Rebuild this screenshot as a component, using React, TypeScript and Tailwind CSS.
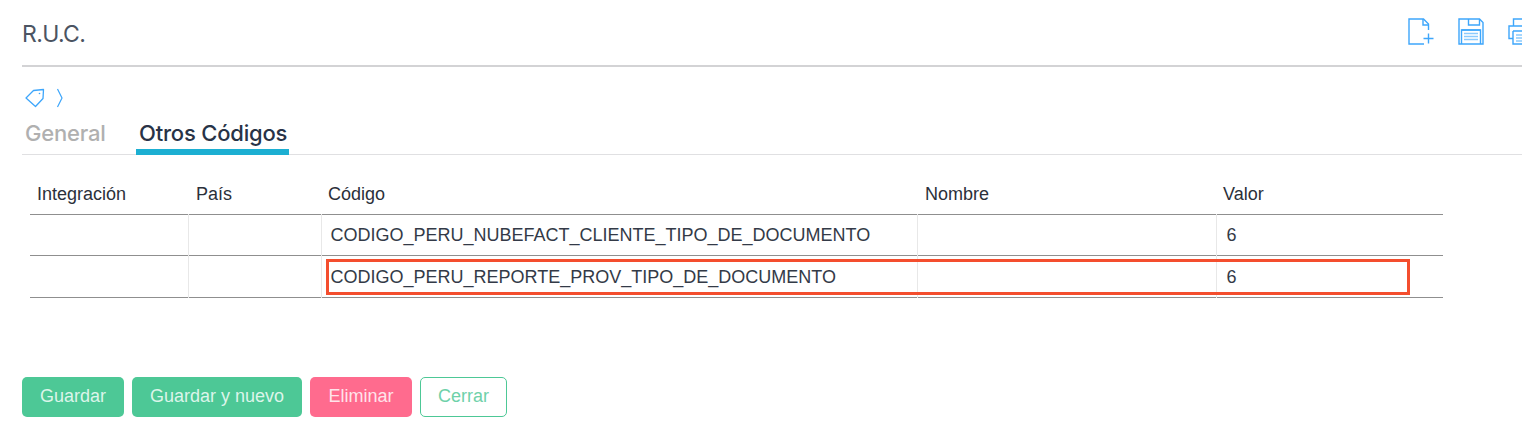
import React from "react";

const blue = "#3ea6fb";

function NewFile() {
  return (
    <svg width="26" height="27" viewBox="0 0 26 27" fill="none" stroke={blue} strokeWidth="1.4">
      <path d="M20.500 12V6L15.500 1H1v25h15" />
      <path d="M15 1v6h6" />
      <path d="M20.500 15.500v10M15.500 20.500h10" />
    </svg>
  );
}
function Save() {
  return (
    <svg width="26" height="27" viewBox="0 0 26 27" fill="none" stroke={blue} strokeWidth="1.4">
      <path d="M1 1h20.500L25 4.500V26H1z" />
      <path d="M10.500 1v6h11V1" />
      <path d="M3.500 26V12h19v14" />
      <path d="M3.500 12h19" />
      <path d="M6 15.500h14M6 18.500h14M6 21.500h14" strokeOpacity="0.6" />
    </svg>
  );
}
function Printer() {
  return (
    <svg width="26" height="27" viewBox="0 0 26 27" fill="none" stroke={blue} strokeWidth="1.4" className="shrink-0">
      <path d="M5.500 8V1h20v7" />
      <path d="M5 20.500H1V8h25" />
      <path d="M5 13h21M5 13v13h21" />
      <path d="M8 17h18M8 20h18M8 23h18" strokeOpacity="0.6" />
    </svg>
  );
}
function Tag() {
  return (
    <svg width="20" height="20" viewBox="0 0 20 20" fill="none" stroke={blue} strokeWidth="1.3" strokeLinejoin="round">
      <path d="M1 10 8.500 2.500 18.500 1.500 18 10.500 10.500 18.500z" />
      <circle cx="14.500" cy="5.500" r="0.8" fill={blue} stroke="none" />
    </svg>
  );
}
function Chevron() {
  return (
    <svg width="8" height="20" viewBox="0 0 8 20" fill="none" stroke={blue} strokeWidth="1.2">
      <path d="M1.500 1 6 10l-4.500 9" />
    </svg>
  );
}

const headers = [
  ["Integración", "w-[158px]", "pl-[7px]"],
  ["País", "w-[133px]", "pl-[8px]"],
  ["Código", "w-[596px]", "pl-[7px]"],
  ["Nombre", "w-[299px]", "pl-[8px]"],
  ["Valor", "w-[227px]", "pl-[7px]"],
];

const rows = [
  "CODIGO_PERU_NUBEFACT_CLIENTE_TIPO_DE_DOCUMENTO",
  "CODIGO_PERU_REPORTE_PROV_TIPO_DE_DOCUMENTO",
];

export default function App() {
  return (
    <div className="w-[1522px] h-[434px] overflow-hidden bg-white pl-[22px] font-['Liberation_Sans',sans-serif]">
      <header className="h-[67px] flex items-center justify-between border-b-2 border-[#d3d3d5]">
        <h1 className="font-['Inter',sans-serif] text-[23px] font-normal tracking-[-0.6px] text-[#4c5462] pt-[4px]">R.U.C.</h1>
        <div className="flex items-center gap-[24px] -mr-[12px] mb-[2px] overflow-hidden">
          <NewFile />
          <Save />
          <Printer />
        </div>
      </header>

      <nav className="flex items-center gap-[11px] h-[20px] mt-[21px] ml-[3px]">
        <Tag />
        <Chevron />
      </nav>

      <div className="flex h-[48px] -mt-[1px] border-b border-[#e0e0e2] font-['Inter',sans-serif] text-[22px]">
        <div className="ml-[3px] w-[111px] pt-[13px] font-medium tracking-[-0.2px] text-[#b0b0b0] leading-[26px]">General</div>
        <div className="w-[153px] h-[48px] border-b-[6px] border-[#1cafd2] pl-[3px] pt-[13px] font-medium tracking-[-0.2px] text-[#283347] leading-[26px] whitespace-nowrap">
          Otros Códigos
        </div>
      </div>

      <div className="relative ml-[8px] mt-[19px] w-[1413px]">
        <table className="w-[1413px] table-fixed border-collapse text-[18px]">
          <thead>
            <tr className="h-[40px] border-b border-[#8f8f8f]">
              {headers.map(([h, w, p]) => (
                <th key={h} className={`${w} ${p} pt-[2px] text-left font-normal text-[#2b303a]`}>
                  {h}
                </th>
              ))}
            </tr>
          </thead>
          <tbody>
            {rows.map((r, i) => (
              <tr key={r} className={`${i === 0 ? "h-[41px]" : "h-[42px]"} border-b border-[#8f8f8f] text-[#333a47]`}>
                <td className="border-r border-[#e8e8e8]" />
                <td className="border-r border-[#e8e8e8]" />
                <td className="border-r border-[#e8e8e8] pl-[9px] pt-[2px] whitespace-nowrap">{r}</td>
                <td className="border-r border-[#e8e8e8]" />
                <td className="pl-[10px] pt-[2px]">6</td>
              </tr>
            ))}
          </tbody>
        </table>
        <div className="absolute left-[296px] top-[85px] w-[1084px] h-[36px] border-[3px] border-[#f44e2e] pointer-events-none" />
      </div>

      <div className="flex gap-[8px] mt-[79px] text-[18px]">
        <button className="w-[102px] h-[40px] rounded-[5px] bg-[#4dc896] text-[#dcf5ea]">Guardar</button>
        <button className="w-[170px] h-[40px] rounded-[5px] bg-[#4dc896] text-[#dcf5ea]">Guardar y nuevo</button>
        <button className="w-[102px] h-[40px] rounded-[5px] bg-[#ff6b8e] text-[#ffe3ea]">Eliminar</button>
        <button className="w-[87px] h-[40px] rounded-[5px] border border-[#4dc896] bg-white text-[#6ed1a9]">Cerrar</button>
      </div>
    </div>
  );
}
